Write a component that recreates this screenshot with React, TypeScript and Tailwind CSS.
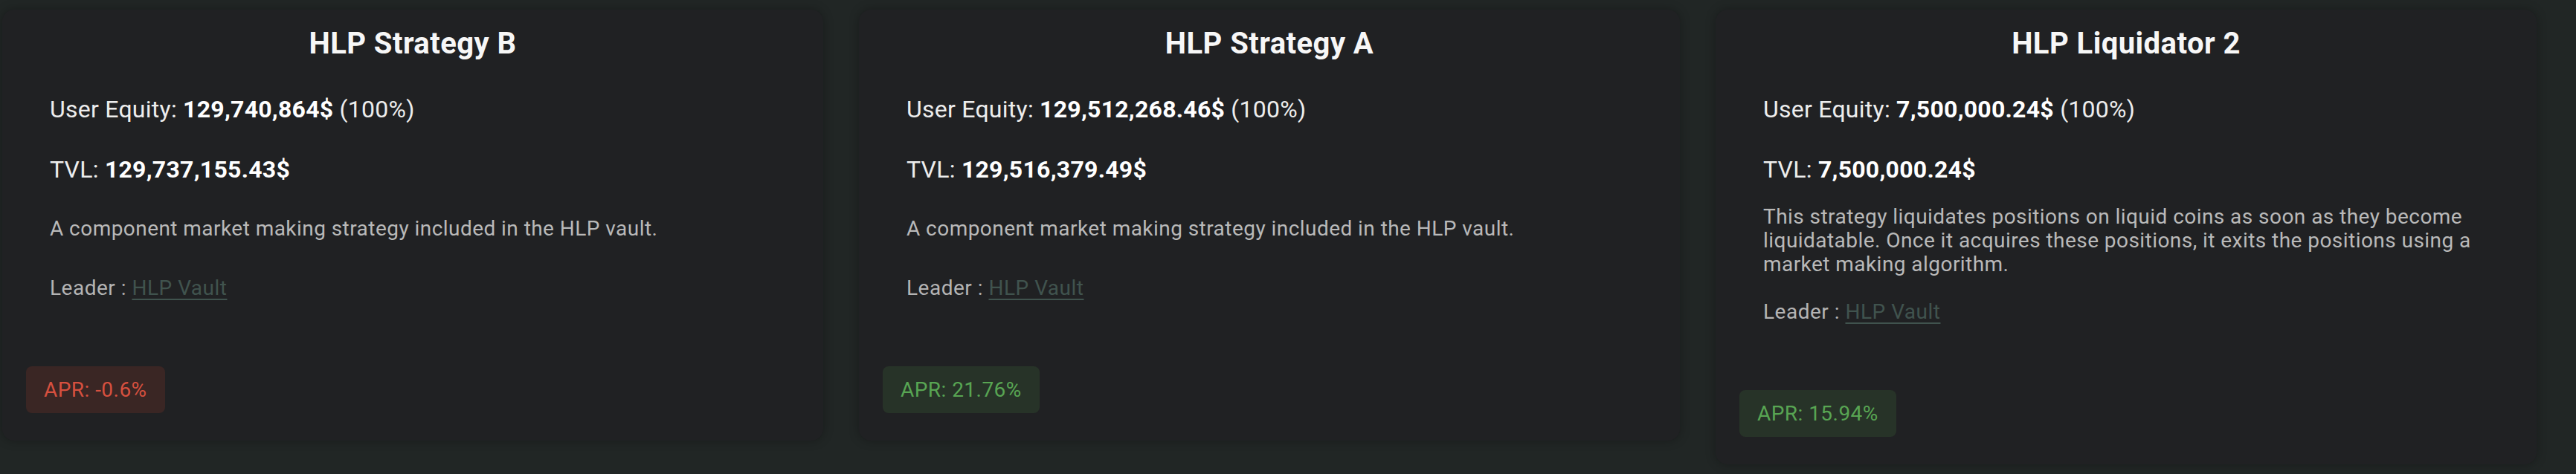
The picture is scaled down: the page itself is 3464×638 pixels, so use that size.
type Strategy = {
  name: string;
  equity: string;
  tvl: string;
  description: string;
  apr: string;
  positive: boolean;
};

const strategies: Strategy[] = [
  {
    name: 'HLP Strategy B',
    equity: '129,740,864$',
    tvl: '129,737,155.43$',
    description: 'A component market making strategy included in the HLP vault.',
    apr: '-0.6%',
    positive: false,
  },
  {
    name: 'HLP Strategy A',
    equity: '129,512,268.46$',
    tvl: '129,516,379.49$',
    description: 'A component market making strategy included in the HLP vault.',
    apr: '21.76%',
    positive: true,
  },
  {
    name: 'HLP Liquidator 2',
    equity: '7,500,000.24$',
    tvl: '7,500,000.24$',
    description:
      'This strategy liquidates positions on liquid coins as soon as they become liquidatable. Once it acquires these positions, it exits the positions using a market making algorithm.',
    apr: '15.94%',
    positive: true,
  },
];

function StrategyCard({ s }: { s: Strategy }) {
  return (
    <div className="rounded-2xl bg-[#202123] pt-[16px] pb-[37px] pl-[32px] pr-[32px] shadow-[0_0_14px_rgba(0,0,0,0.28)]">
      <h2 className="text-center text-[40px] leading-[60px] font-bold tracking-[0.45px] text-[#f7f7f7]">{s.name}</h2>
      <div className="pl-[32px] pr-[6px]">
        <p className="mt-[34px] text-[32px] leading-[48px] tracking-[0.25px] text-[#ededed]">
          User Equity: <span className="font-bold text-white">{s.equity}</span> (100%)
        </p>
        <p className="mt-[33px] text-[32px] leading-[48px] tracking-[0.25px] text-[#ededed]">
          TVL: <span className="font-bold text-white">{s.tvl}</span>
        </p>
        <div className="mt-[24px] flex min-h-[64px] items-center">
          <p className="text-[28px] leading-[32px] tracking-[0.45px] text-[#b9b9b9]">{s.description}</p>
        </div>
        <p className="mt-[32px] text-[28px] leading-[32px] tracking-[0.5px] text-[#b4b4b4]">
          Leader :{' '}
          <a href="#" className="text-[#40534e] underline underline-offset-[5px] decoration-[2px]">
            HLP Vault
          </a>
        </p>
      </div>
      <div className="mt-[89px] flex">
        <span
          className={
            s.positive
              ? 'flex h-[63px] items-center rounded-lg bg-[#273328] px-[24px] text-[28px] tracking-[0.45px] text-[#58a553]'
              : 'flex h-[63px] items-center rounded-lg bg-[#3a2624] px-[24px] text-[28px] tracking-[0.45px] text-[#d6503f]'
          }
        >
          APR: {s.apr}
        </span>
      </div>
    </div>
  );
}

export default function App() {
  return (
    <div
      className="min-h-[638px] w-[3464px] bg-[#212625] pt-[13px] pl-[3px]"
      style={{ fontFamily: 'Roboto, "Liberation Sans", sans-serif' }}
    >
      <div className="grid w-[3408px] grid-cols-3 items-start gap-[48px]">
        {strategies.map((s) => (
          <StrategyCard key={s.name} s={s} />
        ))}
      </div>
    </div>
  );
}
